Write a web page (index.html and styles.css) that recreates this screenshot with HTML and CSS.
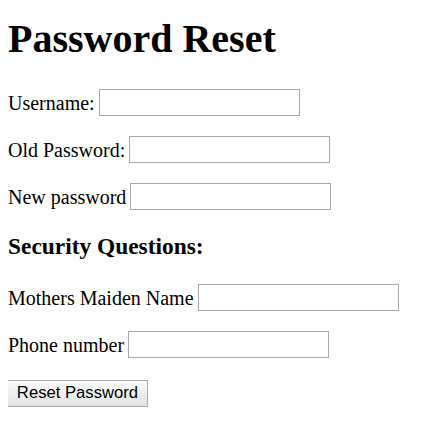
FILE: index.html
```html
<!DOCTYPE html>
<html>
<head>
<meta charset="utf-8">
<title>Password Reset</title>
<link rel="stylesheet" href="styles.css">
</head>
<body>
<h1 class="title">Password Reset</h1>
<form class="form">
  <p class="row"><label>Username:</label> <input class="field" type="text"></p>
  <p class="row"><label>Old Password:</label> <input class="field" type="password"></p>
  <p class="row"><label>New password</label> <input class="field" type="password"></p>
  <h3 class="section">Security Questions:</h3>
  <p class="row"><label>Mothers Maiden Name</label> <input class="field" type="text"></p>
  <p class="row"><label>Phone number</label> <input class="field" type="text"></p>
  <p class="row"><button class="btn" type="button">Reset Password</button></p>
</form>
</body>
</html>
```

FILE: styles.css
```css
html, body {
  background: #fff;
  color: #000;
}
body {
  margin: 8px;
  font-family: "Liberation Serif", "Times New Roman", serif;
  font-size: 20px;
}
.title {
  font-size: 40px;
  font-weight: bold;
  margin: 7px 0 26.8px;
}
.section {
  font-size: 23.4px;
  font-weight: bold;
  margin: 23.4px 0;
}
.row {
  margin: 20px 0;
}
.field {
  box-sizing: border-box;
  width: 201px;
  height: 27px;
  border: 1px solid #a9a9a9;
  padding: 5px 2px 0;
  margin: 0 0 0 -1px;
  font-family: "Liberation Sans", Arial, sans-serif;
  font-size: 16.67px;
  vertical-align: baseline;
  background: #fff;
}
.btn {
  box-sizing: border-box;
  width: 141px;
  height: 27px;
  margin: 2px 0 0 -1px;
  padding: 1px 6px;
  font-family: "Liberation Sans", Arial, sans-serif;
  font-size: 16.67px;
  color: #000;
  border: 1px solid #acacac;
  border-radius: 0;
  background: linear-gradient(#fbfbfb, #e2e2e2);
}
```
